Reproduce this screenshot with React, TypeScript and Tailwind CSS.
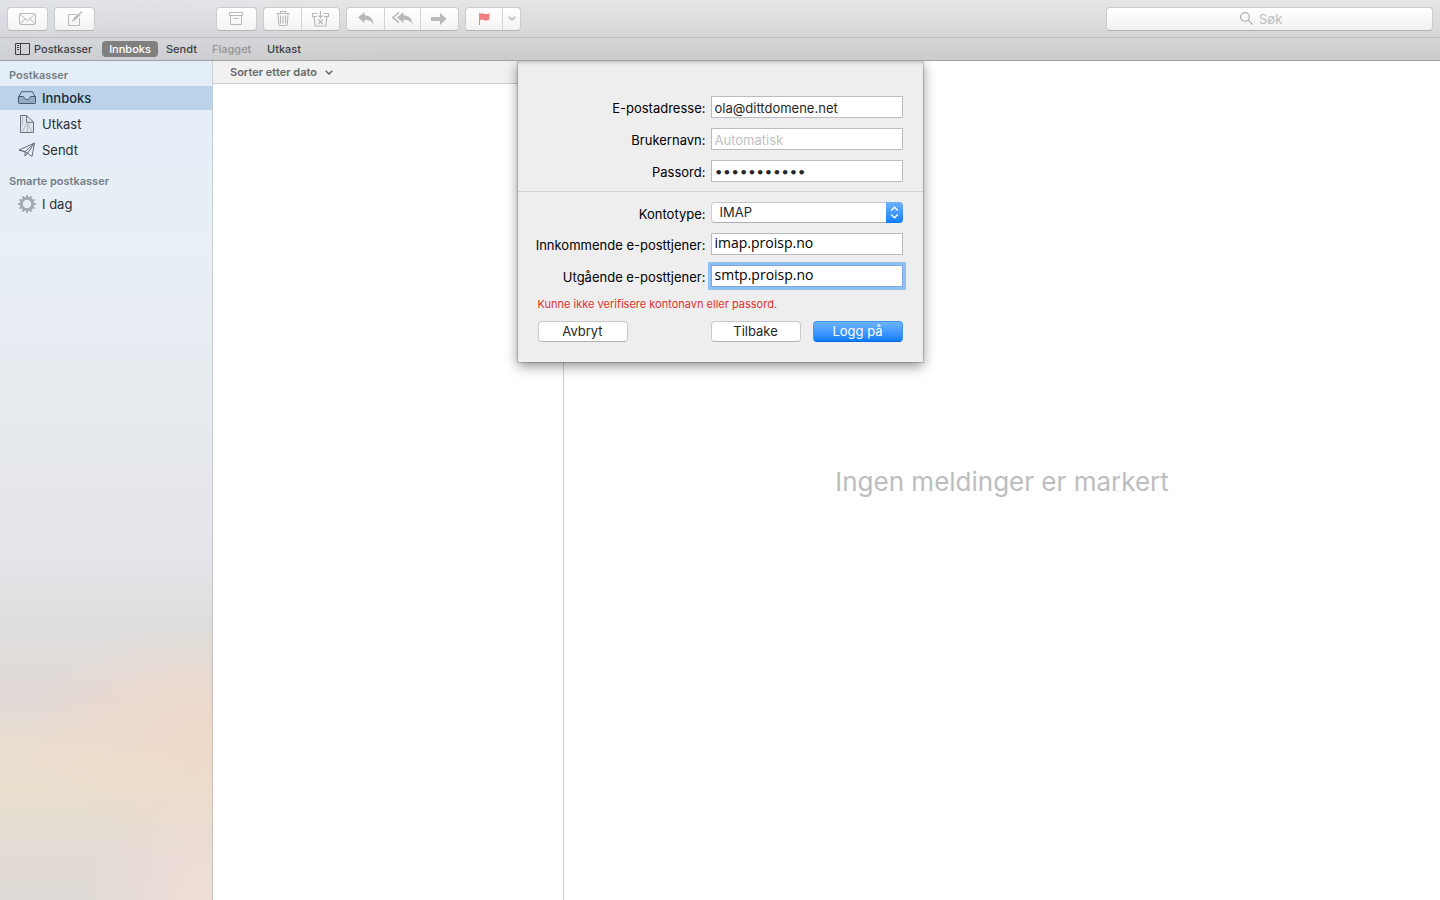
import type { ReactNode } from "react";

const toolButton =
  "flex h-full items-center justify-center text-[#b8b8b8]";

function ToolGroup({ children }: { children: ReactNode }) {
  return (
    <div className="flex h-6 divide-x divide-[#d4d4d4] rounded-[4px] border border-[#cbcbcb] border-b-[#b5b5b5] bg-linear-to-b from-white to-[#f3f3f3]">
      {children}
    </div>
  );
}

function MailIcon() {
  return (
    <svg width="18" height="12" viewBox="0 0 18 12" fill="none" stroke="currentColor" aria-hidden="true">
      <rect x="0.5" y="0.5" width="16" height="11" rx="1" />
      <path d="M1 1l6.1 5.600c.8.7 2 .7 2.800 0L16 1M1 11l5-5.200M16 11l-5-5.200" />
    </svg>
  );
}

function ComposeIcon() {
  return (
    <svg width="16" height="16" viewBox="0 0 16 16" fill="none" stroke="currentColor" aria-hidden="true">
      <path d="M9.500 3.500h-8v11h11V7" />
      <path d="M6.800 8.800l6-6" strokeWidth="2.400" />
      <path d="M13.400 2.200l1.200-1.200" strokeWidth="2.400" />
      <path d="M4.800 10.800l.7-2.400 1.700 1.700z" fill="currentColor" stroke="none" />
    </svg>
  );
}

function ArchiveIcon() {
  return (
    <svg width="15" height="14" viewBox="0 0 15 14" fill="none" stroke="currentColor" aria-hidden="true">
      <path d="M.5.5h13v3H.5zM1.500 3.500v9h11v-9M4.500 6.500h5" />
    </svg>
  );
}

function TrashIcon() {
  return (
    <svg width="14" height="16" viewBox="0 0 14 16" fill="none" stroke="currentColor" aria-hidden="true">
      <path d="M.5 2.500h13M4.500 2.500v-2h5v2M2 2.500l.7 11c.1.600.4 1 1 1h6.600c.6 0 .9-.4 1-1l.7-11M4.500 4.500v8M7 4.500v8M9.500 4.500v8" strokeWidth="1.100" />
    </svg>
  );
}

function JunkIcon() {
  return (
    <svg width="17" height="16" viewBox="0 0 17 16" fill="none" stroke="currentColor" strokeWidth="1.100" aria-hidden="true">
      <path d="M5.500 2.500h-5v3H5M11.500 2.500h5v3H12M2 5.500l1.200 9.500h10.600L15 5.500" />
      <path d="M8.500 0v6.500M6 4.200l2.500 2.500L11 4.200M6.300 8.500l4.400 4.500M10.700 8.500L6.300 13" />
    </svg>
  );
}

function ReplyIcon() {
  return (
    <svg width="16" height="13" viewBox="0 0 16 13" fill="currentColor" aria-hidden="true">
      <path d="M6.500 0v3.200c5.500.2 8.600 3.300 9.300 9.600-2-3.600-4.700-5-9.300-5V11L0 5.500z" />
    </svg>
  );
}

function ReplyAllIcon() {
  return (
    <svg width="21" height="13" viewBox="0 0 21 13" fill="currentColor" aria-hidden="true">
      <path d="M11.500 0v3.200c5.500.2 8.600 3.300 9.300 9.600-2-3.600-4.700-5-9.300-5V11L5 5.500z" />
      <path d="M7 .4L1 5.500l6 5.100" fill="none" stroke="currentColor" strokeWidth="1.500" />
    </svg>
  );
}

function ForwardIcon() {
  return (
    <svg width="17" height="12" viewBox="0 0 17 12" fill="currentColor" aria-hidden="true">
      <path d="M0 4h9V0l6.500 6L9 12V8H0z" />
    </svg>
  );
}

function FlagIcon() {
  return (
    <svg width="11" height="12" viewBox="0 0 11 12" fill="#f08080" aria-hidden="true">
      <path d="M0 0h1v12H0zM1 .8c1.500-.9 3-.6 4.500 0 1.500.5 3 .3 5-.6v6.400c-2 1-3.500 1.200-5 .7C4 6.700 2.500 6.500 1 7.300z" />
    </svg>
  );
}

function Chevron() {
  return (
    <svg width="8" height="5" viewBox="0 0 8 5" fill="none" stroke="currentColor" strokeWidth="1.500" aria-hidden="true">
      <path d="M.7.7L4 4 7.300.7" />
    </svg>
  );
}

function SidebarIcon() {
  return (
    <svg width="15" height="12" viewBox="0 0 15 12" fill="none" stroke="#404040" aria-hidden="true">
      <path d="M.5.5h14v11H.5zM5.500.5v11M2 2.500h2M2 4.500h2M2 6.500h2" />
    </svg>
  );
}

function InboxIcon() {
  return (
    <svg width="18" height="13" viewBox="0 0 18 13" fill="none" stroke="#475a70" strokeLinejoin="round" aria-hidden="true">
      <path d="M.5 6.500L3.500.7h11l3 5.800v5c0 .6-.4 1-1 1h-15c-.6 0-1-.4-1-1z" />
      <path d="M.5 5.500H5c.6 0 1 .4 1.200 1 .4 1.200 1.400 2 2.800 2s2.400-.8 2.800-2c.2-.6.6-1 1.200-1h4.500v6c0 .6-.4 1-1 1h-15c-.6 0-1-.4-1-1z" fill="#93acc6" />
    </svg>
  );
}

function DraftIcon() {
  return (
    <svg width="18" height="18" viewBox="-1 0 18 18" fill="none" stroke="#6b747d" aria-hidden="true">
      <path d="M1.500.5h6l7 6.500v10.500h-13z" fill="#d5dde5" fillOpacity="0.6" />
      <path d="M7.500 8L3.500 17M8.500 8v9M8.500 8l4.500 9M3.500 2v8" stroke="#b4bcc4" />
      <path d="M7.500.5v6.800h7" />
    </svg>
  );
}

function SentIcon() {
  return (
    <svg width="18" height="16" viewBox="0 0 18 16" fill="none" stroke="#66707a" strokeLinejoin="round" aria-hidden="true">
      <path d="M1 8L16.500 1 14 14.500l-4.500-3.300L7 14V9.700z" />
      <path d="M1 8l6 1.700L16.500 1 9.500 11.200M7 14l2.500-2.800L7 9.700" />
    </svg>
  );
}

const teeth = [0, 30, 60, 90, 120, 150, 180, 210, 240, 270, 300, 330];

function GearIcon() {
  return (
    <svg width="18" height="18" viewBox="0 0 18 18" fill="none" stroke="#a3a9af" aria-hidden="true">
      <circle cx="9" cy="9" r="5.700" strokeWidth="2.900" />
      {teeth.map((angle) => (
        <path key={angle} d="M9 0v3" strokeWidth="2" transform={`rotate(${angle} 9 9)`} />
      ))}
    </svg>
  );
}

function SearchIcon() {
  return (
    <svg width="13" height="13" viewBox="0 0 13 13" fill="none" stroke="#b0b0b0" strokeWidth="1.200" aria-hidden="true">
      <circle cx="5" cy="5" r="4.400" />
      <path d="M8.200 8.200l4.300 4.300" />
    </svg>
  );
}

function Toolbar() {
  return (
    <div className="flex h-[38px] items-center gap-1.5 border-b border-[#bdbdbd] px-[7px]">
      <div className="flex w-[203px] gap-1.5">
        <ToolGroup>
          <button aria-label="Hent e-post" className={`${toolButton} w-[39px]`}><MailIcon /></button>
        </ToolGroup>
        <ToolGroup>
          <button aria-label="Ny melding" className={`${toolButton} w-[39px]`}><ComposeIcon /></button>
        </ToolGroup>
      </div>
      <ToolGroup>
        <button aria-label="Arkiver" className={`${toolButton} w-[39px]`}><ArchiveIcon /></button>
      </ToolGroup>
      <ToolGroup>
        <button aria-label="Slett" className={`${toolButton} w-[38px]`}><TrashIcon /></button>
        <button aria-label="Uønsket" className={`${toolButton} w-[37px]`}><JunkIcon /></button>
      </ToolGroup>
      <ToolGroup>
        <button aria-label="Svar" className={`${toolButton} w-[38px]`}><ReplyIcon /></button>
        <button aria-label="Svar alle" className={`${toolButton} w-9`}><ReplyAllIcon /></button>
        <button aria-label="Videresend" className={`${toolButton} w-[37px]`}><ForwardIcon /></button>
      </ToolGroup>
      <ToolGroup>
        <button aria-label="Flagg" className={`${toolButton} w-[37px]`}><FlagIcon /></button>
        <button aria-label="Velg flagg" className={`${toolButton} w-[17px]`}><Chevron /></button>
      </ToolGroup>
      <label className="ml-auto flex h-6 w-[327px] items-center justify-center gap-1.5 rounded-[4px] border border-[#cbcbcb] border-b-[#b0b0b0] bg-linear-to-b from-white to-[#f1f1f1]">
        <SearchIcon />
        <input
          type="text"
          aria-label="Søk"
          placeholder="Søk"
          className="w-10 bg-transparent pt-0.5 text-[13px] outline-none placeholder:text-[#bdbdbd]"
        />
      </label>
    </div>
  );
}

function FavoritesBar() {
  return (
    <nav className="flex h-[23px] items-center border-b border-[#a0a0a0] pl-[15px] text-[11px] font-medium text-[#404040]">
      <a href="#postkasser" className="flex w-[87px] items-center gap-1"><SidebarIcon />Postkasser</a>
      <a href="#innboks" className="flex h-4 w-14 items-center justify-center rounded-[4px] bg-[#808080] text-white">Innboks</a>
      <a href="#sendt" className="ml-2 w-[46px]">Sendt</a>
      <a href="#flagget" className="w-[55px] text-[#969696]">Flagget</a>
      <a href="#utkast">Utkast</a>
    </nav>
  );
}

function MailboxLink({ icon, label, active }: { icon: ReactNode; label: string; active?: boolean }) {
  return (
    <a
      href={`#${label}`}
      className={`my-px flex h-6 items-center pl-[18px] text-[13px] ${active ? "bg-[#bad3e8] font-medium text-[#182a3c]" : "text-[#2b2f33]"}`}
    >
      <span className="flex w-6 pb-px">{icon}</span>
      <span className="pt-0.5">{label}</span>
    </a>
  );
}

function Sidebar() {
  return (
    <aside className="flex w-[213px] shrink-0 flex-col border-r border-[#00000020] bg-[radial-gradient(ellipse_190px_110px_at_100%_80%,#efd9c9_0%,#efd9c980_50%,#efd9c900_100%),radial-gradient(ellipse_130px_120px_at_100%_100%,#f0ded6_0%,#f0ded600_100%),linear-gradient(to_bottom,#e4eef8_0%,#e8eff6_22%,#e6e9ed_47%,#e3e4e8_60%,#dededc_67%,#e1d9d6_76%,#e4dbd3_79%,#ebdfce_83%,#e8dfcd_87%,#e2dad5_95%,#dfdad6_100%)] pt-1">
      <h2 className="flex h-5 items-center pl-[9px] text-[11px] font-semibold text-[#747d85]">Postkasser</h2>
      <MailboxLink icon={<InboxIcon />} label="Innboks" active />
      <MailboxLink icon={<DraftIcon />} label="Utkast" />
      <MailboxLink icon={<SentIcon />} label="Sendt" />
      <h2 className="mt-2 flex h-5 items-center pl-[9px] text-[11px] font-semibold text-[#747d85]">Smarte postkasser</h2>
      <MailboxLink icon={<GearIcon />} label="I dag" />
    </aside>
  );
}

const fieldBox =
  "h-[22px] w-full border border-[#bcbcbc] bg-white px-[3px] pt-0.5 text-[13px] text-[#262626] outline-none placeholder:text-[#bfbfbf]";
const fieldRow = "grid grid-cols-[168px_192px] items-center gap-x-[5px]";
const fieldLabel = "flex justify-end pt-0.5 whitespace-nowrap";
const serverBox =
  "h-[22px] w-full bg-white px-[3px] pb-[3px] font-['Open_Sans','Noto_Sans',sans-serif] text-[14px] text-black outline-none";
const pushButton =
  "h-[21px] w-[90px] rounded-[4px] border border-[#c9c9c9] border-b-[#b0b0b0] bg-white pb-0.5 text-[#262626]";

function AccountDialog() {
  return (
    <form
      role="dialog"
      aria-label="Legg til e-postkonto"
      onSubmit={(event) => event.preventDefault()}
      className="absolute inset-x-0 top-0 mx-auto w-[405px] bg-[#eeeeee] pt-[35px] pb-5 text-[13px] leading-4 text-black shadow-[0_0_1px_1px_#00000028,0_4px_12px_#00000070,inset_0_4px_4px_-3px_#00000040] [clip-path:inset(0_-30px_-40px_-30px)]"
    >
      <div className="flex flex-col gap-2.5 border-b border-[#d2d2d2] px-5 pb-[9px]">
        <div className={fieldRow}>
          <label htmlFor="email" className={fieldLabel}>E-postadresse:</label>
          <input id="email" type="email" defaultValue="ola@dittdomene.net" className={fieldBox} />
        </div>
        <div className={fieldRow}>
          <label htmlFor="user" className={fieldLabel}>Brukernavn:</label>
          <input id="user" placeholder="Automatisk" className={fieldBox} />
        </div>
        <div className={fieldRow}>
          <label htmlFor="password" className={fieldLabel}>Passord:</label>
          <input
            id="password"
            type="password"
            defaultValue="hemmelig123"
            className="h-[22px] w-full border border-[#bcbcbc] bg-white px-[3px] pt-0.5 font-['DejaVu_Sans',sans-serif] text-[13px] font-bold text-[#262626] outline-none"
          />
        </div>
      </div>
      <div className="flex flex-col gap-2.5 px-5 pt-2.5">
        <div className={fieldRow}>
          <label htmlFor="type" className={fieldLabel}>Kontotype:</label>
          <div className="relative">
            <select
              id="type"
              className="block h-[21px] w-full appearance-none rounded-[4px] border border-[#c9c9c9] border-b-[#b0b0b0] bg-white px-2 pb-0.5 text-[13px] leading-4 text-[#262626] outline-none"
            >
              <option>IMAP</option>
              <option>POP</option>
            </select>
            <span className="pointer-events-none absolute inset-y-0 right-0 flex w-[17px] items-center justify-center rounded-r-[4px] bg-linear-to-b from-[#6cb3fa] to-[#087eff]">
              <svg width="9" height="13" viewBox="0 0 9 13" fill="none" stroke="white" strokeWidth="1.400" aria-hidden="true">
                <path d="M1.200 4.500l3.300-3.300 3.300 3.300M1.200 8.500l3.300 3.300 3.300-3.300" />
              </svg>
            </span>
          </div>
        </div>
        <div className={fieldRow}>
          <label htmlFor="incoming" className={fieldLabel}>Innkommende e-posttjener:</label>
          <input id="incoming" defaultValue="imap.proisp.no" className={`${serverBox} border border-[#bcbcbc]`} />
        </div>
        <div className={fieldRow}>
          <label htmlFor="outgoing" className={fieldLabel}>Utgående e-posttjener:</label>
          <input id="outgoing" defaultValue="smtp.proisp.no" className={`${serverBox} border border-[#7aa7de] ring-3 ring-[#93c0f3]`} />
        </div>
        <p className="-my-px text-[11px] leading-4 text-[#e0322f]">Kunne ikke verifisere kontonavn eller passord.</p>
        <div className="flex gap-3">
          <button type="button" className={`${pushButton} mr-auto`}>Avbryt</button>
          <button type="button" className={pushButton}>Tilbake</button>
          <button
            type="submit"
            className="h-[21px] w-[90px] rounded-[4px] border border-[#3d97f7] border-b-[#0768e0] bg-linear-to-b from-[#6cb3fa] to-[#087eff] pb-0.5 text-white"
          >
            Logg på
          </button>
        </div>
      </div>
    </form>
  );
}

export default function App() {
  return (
    <div className="flex min-h-screen flex-col bg-white font-['Inter','Liberation_Sans',sans-serif]">
      <header className="bg-[linear-gradient(to_right,#cfdcf040,#cfdcf000_500px),linear-gradient(to_bottom,#e6e6e6,#cbcbcb)]">
        <Toolbar />
        <FavoritesBar />
      </header>
      <main className="relative flex flex-1">
        <Sidebar />
        <section aria-label="Meldinger" className="w-[351px] shrink-0 border-r border-[#d0d0d0]">
          <button className="flex h-[23px] w-full items-center gap-2 border-b border-[#cacaca] bg-[#f1f1f1] pl-[17px] text-[11px] font-semibold text-[#686868]">
            Sorter etter dato
            <Chevron />
          </button>
        </section>
        <section className="flex flex-1 items-center justify-center pt-0.5">
          <p className="text-[26px] text-[#bdbdbd]">Ingen meldinger er markert</p>
        </section>
        <AccountDialog />
      </main>
    </div>
  );
}
